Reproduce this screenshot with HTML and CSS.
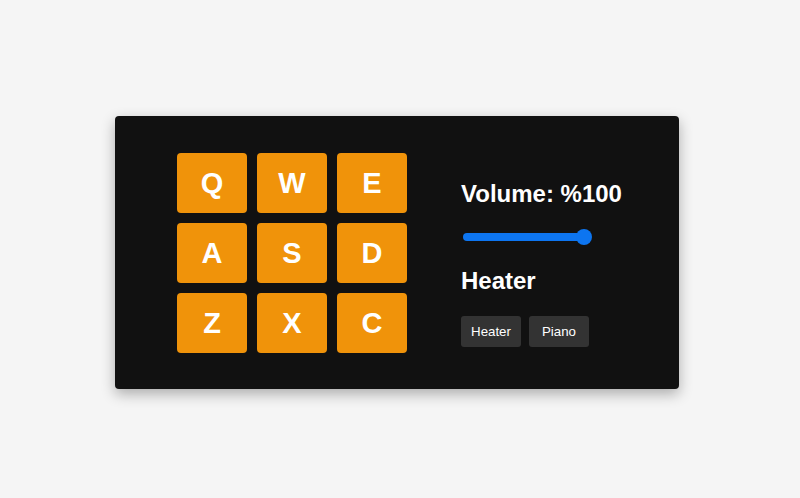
FILE: index.html
```html
<!DOCTYPE html>
<html>
<head>
<meta charset="utf-8">
<link rel="stylesheet" href="styles.css">
</head>
<body>
<div class="machine">
  <div class="pads">
    <div class="pad">Q</div>
    <div class="pad">W</div>
    <div class="pad">E</div>
    <div class="pad">A</div>
    <div class="pad">S</div>
    <div class="pad">D</div>
    <div class="pad">Z</div>
    <div class="pad">X</div>
    <div class="pad">C</div>
  </div>
  <div class="controls">
    <h2 class="volume">Volume: %100</h2>
    <div class="slider"><div class="track"></div><div class="thumb"></div></div>
    <h2 class="display">Heater</h2>
    <div class="banks">
      <button class="bank">Heater</button>
      <button class="bank">Piano</button>
    </div>
  </div>
</div>
</body>
</html>
```
FILE: styles.css
```css
html {
  background: #f5f5f5;
}
body {
  margin: 0;
  min-height: 498px;
  box-sizing: border-box;
  padding: 116px 0 0 115px;
  font-family: "Liberation Sans", Arial, sans-serif;
}
.machine {
  width: 564px;
  height: 273px;
  box-sizing: border-box;
  background: #111111;
  border-radius: 4px;
  box-shadow: 0 5px 14px rgba(0, 0, 0, 0.3);
  display: flex;
  padding: 37px 0 36px 62px;
  gap: 54px;
}
.pads {
  display: grid;
  grid-template-columns: repeat(3, 70px);
  grid-template-rows: repeat(3, 60px);
  gap: 10px;
}
.pad {
  background: #f0930a;
  border-radius: 4px;
  color: #fff;
  font-weight: bold;
  font-size: 29px;
  display: flex;
  align-items: center;
  justify-content: center;
}
.controls {
  display: flex;
  flex-direction: column;
  padding-top: 27px;
  color: #fff;
}
.volume, .display {
  margin: 0;
  font-size: 24px;
  font-weight: bold;
  line-height: 28px;
}
.slider {
  position: relative;
  width: 129px;
  height: 16px;
  margin: 21px 0 22px 2px;
}
.track {
  position: absolute;
  left: 0;
  right: 2px;
  top: 4px;
  height: 8px;
  border-radius: 4px;
  background: #0d75f0;
}
.thumb {
  position: absolute;
  right: 0;
  top: 0;
  width: 16px;
  height: 16px;
  border-radius: 50%;
  background: #0d75f0;
}
.banks {
  display: flex;
  gap: 8px;
  margin-top: 21px;
}
.bank {
  width: 60px;
  height: 31px;
  border: none;
  border-radius: 3px;
  background: #333333;
  color: #fff;
  font-family: "Liberation Sans", Arial, sans-serif;
  font-size: 13.3px;
  padding: 0;
}
```
